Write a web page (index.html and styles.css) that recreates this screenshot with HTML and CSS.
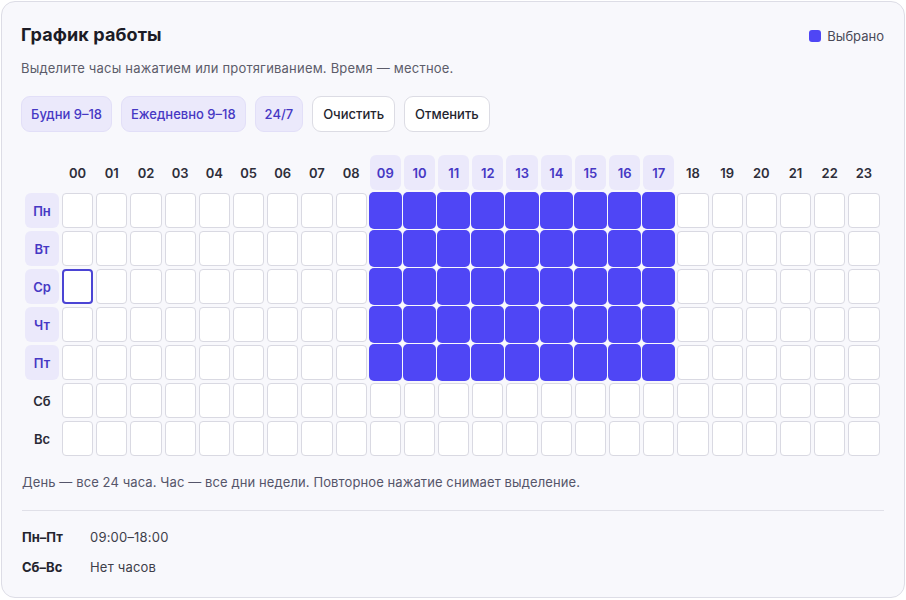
FILE: index.html
```html
<!DOCTYPE html>
<html lang="ru">
<head>
<meta charset="utf-8">
<title>График работы</title>
<link rel="stylesheet" href="styles.css">
</head>
<body>
<div class="card">
  <div class="head">
    <h1 class="title">График работы</h1>
    <div class="legend"><span class="legend-swatch"></span>Выбрано</div>
  </div>
  <p class="sub">Выделите часы нажатием или протягиванием. Время — местное.</p>
  <div class="actions">
    <button class="btn preset">Будни 9–18</button>
    <button class="btn preset">Ежедневно 9–18</button>
    <button class="btn preset">24/7</button>
    <button class="btn plain">Очистить</button>
    <button class="btn plain">Отменить</button>
  </div>
  <div class="grid" id="grid"></div>
  <p class="note">День — все 24 часа. Час — все дни недели. Повторное нажатие снимает выделение.</p>
  <div class="divider"></div>
  <div class="summary">
    <div class="sum-row"><span class="sum-label">Пн–Пт</span><span class="sum-value">09:00–18:00</span></div>
    <div class="sum-row"><span class="sum-label">Сб–Вс</span><span class="sum-value">Нет часов</span></div>
  </div>
</div>
<script src="app.js"></script>
</body>
</html>
```

FILE: styles.css
```css
* { box-sizing: border-box; }
html, body { margin: 0; padding: 0; background: #ffffff; }
body {
  padding: 1px;
  font-family: Inter, "Noto Sans", "DejaVu Sans", sans-serif;
  color: #1c1c28;
}
.card {
  width: 904px;
  height: 597px;
  border: 1px solid #dddde6;
  border-radius: 14px;
  background: #f8f8fc;
  padding: 20px 20px 0 19px;
}
.head {
  display: flex;
  align-items: center;
  justify-content: space-between;
  height: 26px;
}
.title {
  margin: 0;
  font-size: 18px;
  font-weight: 700;
  letter-spacing: 0.1px;
  color: #1c1c26;
  line-height: 26px;
}
.legend {
  display: flex;
  align-items: center;
  gap: 6px;
  font-size: 13px;
  color: #4a4a58;
  padding-top: 1px;
}
.legend-swatch {
  width: 12px;
  height: 12px;
  border-radius: 3px;
  background: #4f46f5;
}
.sub {
  margin: 11px 0 0;
  font-size: 13px;
  line-height: 18px;
  letter-spacing: 0.2px;
  color: #5c5c6a;
}
.actions {
  display: flex;
  gap: 9px;
  margin-top: 19px;
}
.btn {
  height: 36px;
  border-radius: 9px;
  font-family: inherit;
  font-size: 13px;
  font-weight: 500;
  cursor: pointer;
}
.preset {
  padding: 0 9px;
  background: #ebe9fb;
  border: 1px solid #e2dff8;
  color: #4638c4;
}
.plain {
  padding: 0 10px;
  background: #ffffff;
  border: 1px solid #dcdce4;
  color: #24242e;
}
.grid {
  display: grid;
  grid-template-columns: 38px repeat(24, 31.2px);
  grid-template-rows: 35px repeat(7, 35px);
  gap: 3px;
  margin-top: 23px;
}
.hour {
  display: flex;
  align-items: center;
  justify-content: center;
  font-size: 13px;
  font-weight: 600;
  color: #2e2e3a;
  border-radius: 6px;
}
.hour.on {
  background: #ebe9fb;
  color: #4638c4;
}
.day {
  justify-self: end;
  width: 34px;
  display: flex;
  align-items: center;
  justify-content: center;
  font-size: 13px;
  font-weight: 600;
  color: #2a2a36;
  border-radius: 6px;
}
.day.on {
  background: #ebe9fb;
  color: #4638c4;
}
.cell {
  background: #ffffff;
  border: 1px solid #d9d9e2;
  border-radius: 4px;
}
.cell.sel {
  background: #4f46f5;
  border-color: #4f46f5;
  box-shadow: 0 0 0 1px #4f46f5;
}
.cell.focus {
  border: 2px solid #4b44d4;
}
.note {
  margin: 17px 0 0 1px;
  font-size: 13px;
  line-height: 18px;
  letter-spacing: 0.1px;
  color: #55556a;
}
.divider {
  height: 1px;
  background: #e0e0e8;
  margin: 19px 0 0 1px;
}
.summary {
  margin-top: 17px;
  margin-left: 1px;
  display: flex;
  flex-direction: column;
  gap: 12px;
}
.sum-row {
  display: flex;
  align-items: center;
  height: 18px;
  font-size: 13px;
}
.sum-label {
  width: 68px;
  font-weight: 700;
  color: #24242e;
}
.sum-value {
  letter-spacing: 0.2px;
  color: #3e3e4a;
}
```

FILE: app.js
```js
(function () {
  var grid = document.getElementById('grid');
  var days = ['Пн', 'Вт', 'Ср', 'Чт', 'Пт', 'Сб', 'Вс'];
  function isSel(d, h) { return d < 5 && h >= 9 && h <= 17; }
  var corner = document.createElement('div');
  grid.appendChild(corner);
  for (var h = 0; h < 24; h++) {
    var el = document.createElement('div');
    el.className = 'hour' + (h >= 9 && h <= 17 ? ' on' : '');
    el.textContent = (h < 10 ? '0' : '') + h;
    grid.appendChild(el);
  }
  for (var d = 0; d < 7; d++) {
    var dl = document.createElement('div');
    dl.className = 'day' + (d < 5 ? ' on' : '');
    dl.textContent = days[d];
    grid.appendChild(dl);
    for (var h2 = 0; h2 < 24; h2++) {
      var c = document.createElement('div');
      var cls = 'cell';
      if (isSel(d, h2)) cls += ' sel';
      if (d === 2 && h2 === 0) cls += ' focus';
      c.className = cls;
      grid.appendChild(c);
    }
  }
})();
```
